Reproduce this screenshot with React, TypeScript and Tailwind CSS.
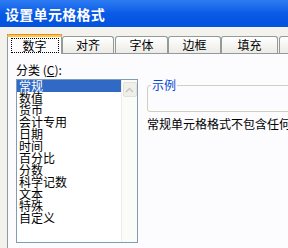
import React from "react";

const items = ["常规", "数值", "货币", "会计专用", "日期", "时间", "百分比", "分数", "科学记数", "文本", "特殊", "自定义"];

function Tab({ label, w }: { label: string; w: string }) {
  return (
    <div
      className={`${w} h-[17px] shrink-0 border border-b-0 border-[#919b9c] rounded-t-[3px] bg-gradient-to-b from-[#ffffff] to-[#ecebe5] flex items-center justify-center text-[12px] leading-[14px] text-black`}
    >
      {label}
    </div>
  );
}

export default function App() {
  return (
    <div
      className="w-[288px] h-[248px] overflow-hidden bg-[#f3f2ec] flex flex-col"
      style={{ fontFamily: '"Noto Sans CJK SC", "Noto Sans", sans-serif' }}
    >
      <div className="h-[27px] shrink-0 bg-gradient-to-b from-[#2d7cf2] via-[#0a5ae6] to-[#0452de] flex items-center pl-[5px]">
        <span className="text-white font-bold text-[14px] leading-[16px] tracking-[0.3px]">设置单元格格式</span>
      </div>
      <div className="h-[6px] shrink-0" />
      <div className="flex items-end pl-[7px] h-[20px] shrink-0">
        <div className="w-[55px] h-[20px] shrink-0 relative border-x border-[#919b9c] bg-[#fcfcfe] flex items-center justify-center z-10 -mb-px">
          <div className="absolute -left-px -right-px top-0 h-[3px] rounded-t-[3px] bg-[#ffc83c] border-t border-[#e68b2c]" />
          <div className="mt-[3px] w-[48px] h-[15px] border border-dotted border-black flex items-center justify-center text-[12px] leading-[14px] text-black">
            数字
          </div>
        </div>
        <Tab label="对齐" w="w-[52px]" />
        <div className="w-[1px] shrink-0" />
        <Tab label="字体" w="w-[53px]" />
        <Tab label="边框" w="w-[53px]" />
        <Tab label="填充" w="w-[57px]" />
        <div className="w-[1px] shrink-0" />
        <Tab label="" w="w-[20px]" />
      </div>
      <div className="flex-1 ml-[7px] border-t border-l border-[#919b9c] bg-[#fcfcfe] flex pl-[8px] pt-[9px] gap-[9px]">
        <div className="w-[122px] shrink-0 flex flex-col">
          <div className="text-[12px] leading-[14px] text-black">
            分类 (<span className="underline">C</span>):
          </div>
          <div className="mt-[2px] flex-1 border border-[#7f9db9] bg-white flex mb-[5px]">
            <div className="flex-1 flex flex-col">
              {items.map((t, i) => (
                <div
                  key={t}
                  className={`h-[12px] text-[12px] leading-[12px] pl-[2px] ${i === 0 ? "bg-[#316ac5] text-white" : "text-black"}`}
                >
                  {t}
                </div>
              ))}
            </div>
            <div className="w-[16px] shrink-0 bg-[#fbfbf8] border-l border-[#ededea] flex flex-col items-center pt-[2px]">
              <div className="w-[14px] h-[15px] rounded-[2px] border border-[#e2e1dc] bg-[#f0efea] flex items-center justify-center">
                <svg width="9" height="6" viewBox="0 0 9 6">
                  <path d="M1 5 L4.5 1.5 L8 5" fill="none" stroke="#c9c8c0" strokeWidth="1.5" />
                </svg>
              </div>
            </div>
          </div>
        </div>
        <div className="flex-1 min-w-0 flex flex-col pt-[15px]">
          <fieldset className="w-[160px] h-[34px] border border-[#d0d0bf] rounded-[3px] pl-[3px]">
            <legend className="text-[12px] leading-[14px] text-[#0046d5] px-[1px]">示例</legend>
          </fieldset>
          <div className="mt-[5px] whitespace-nowrap text-[12px] leading-[14px] text-black">
            常规单元格格式不包含任何特定的数字格式。
          </div>
        </div>
      </div>
    </div>
  );
}
